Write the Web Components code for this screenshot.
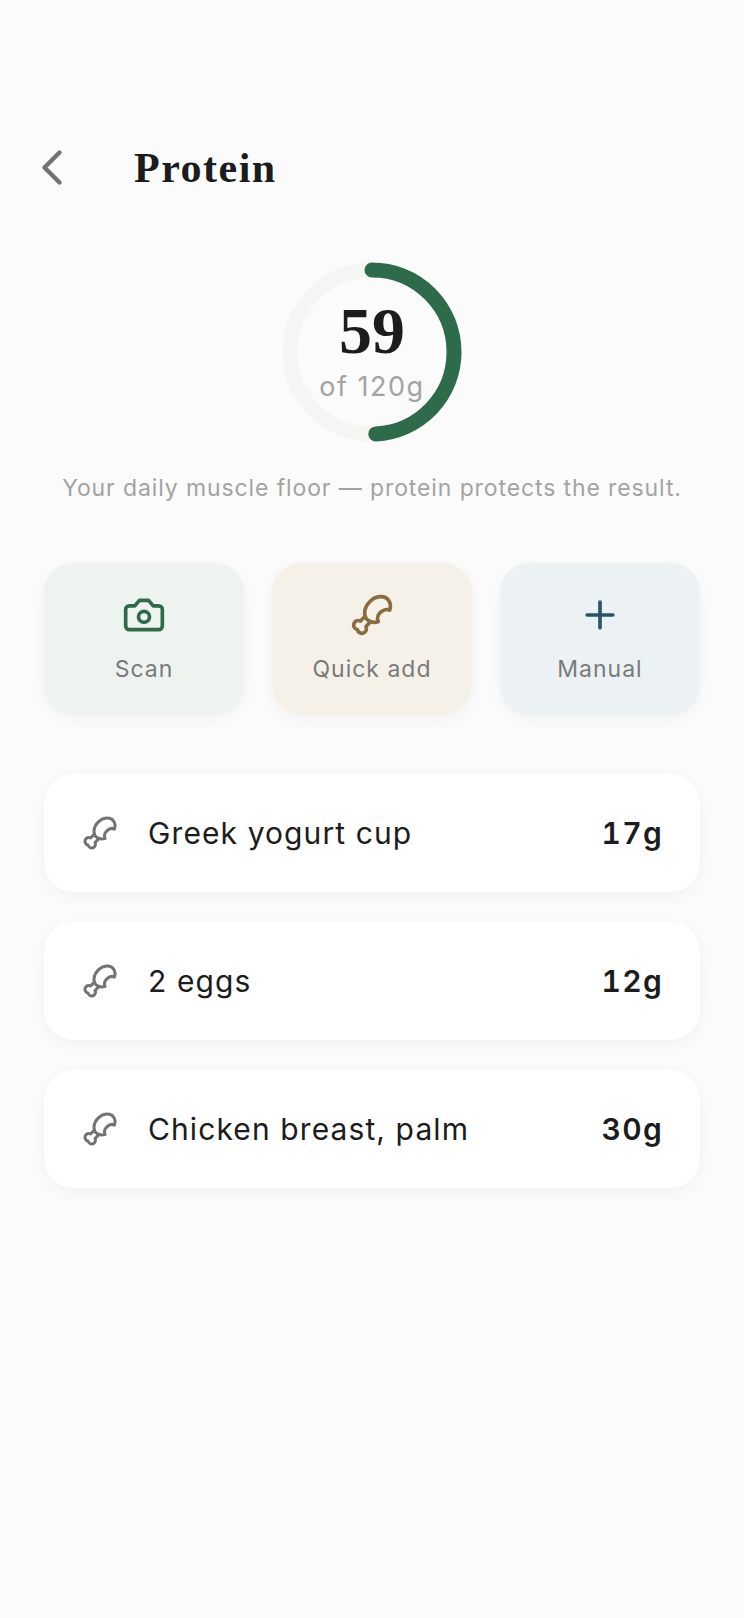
<!DOCTYPE html>
<html lang="en">
<head>
<meta charset="utf-8">
<title>Protein</title>
<style>
  html, body { margin: 0; background: #fbfbfb; }
  body { font-family: "Inter", "Liberation Sans", sans-serif; color: #1c1c1c; }
</style>
</head>
<body>
<protein-screen>
  <screen-header slot="header" title="Protein"></screen-header>
  <progress-ring slot="ring" value="59" goal="120"></progress-ring>
  <span slot="caption">Your daily muscle floor — protein protects the result.</span>
  <action-tile slot="actions" icon="camera" bg="#eff3f0" tint="#2e6b4a">Scan</action-tile>
  <action-tile slot="actions" icon="drumstick" bg="#f5f1e9" tint="#8a6d3f">Quick add</action-tile>
  <action-tile slot="actions" icon="plus" bg="#ecf1f4" tint="#2a5468">Manual</action-tile>
  <food-row slot="rows" grams="17g">Greek yogurt cup</food-row>
  <food-row slot="rows" grams="12g">2 eggs</food-row>
  <food-row slot="rows" grams="30g">Chicken breast, palm</food-row>
</protein-screen>

<script>
(function() {
  // shared icon paths, all on a 24 grid
  const ICONS = {
    camera: '<path d="M14.5 4h-5L7 7H4a2 2 0 0 0-2 2v9a2 2 0 0 0 2 2h16a2 2 0 0 0 2-2V9a2 2 0 0 0-2-2h-3l-2.5-3z"/><circle cx="12" cy="13" r="3"/>',
    drumstick: '<path d="M15.4 15.63a7.875 6 135 1 1 6.23-6.23 4.5 3.43 135 0 0-6.23 6.23"/><path d="m8.29 12.71-2.6 2.6a2.5 2.5 0 1 0-1.65 4.65A2.5 2.5 0 1 0 8.7 18.3l2.59-2.59"/>',
    plus: '<path d="M5 12h14"/><path d="M12 5v14"/>'
  };

  function iconSvg(name, size, weight) {
    return `<svg width="${size}" height="${size}" viewBox="0 0 24 24" fill="none" stroke="currentColor"
      stroke-width="${weight}" stroke-linecap="round" stroke-linejoin="round">${ICONS[name]}</svg>`;
  }

  class ScreenHeader extends HTMLElement {
    constructor() {
      super();
      this.attachShadow({ mode: 'open' });
      this.shadowRoot.innerHTML = `
        <style>
          :host { display: flex; align-items: center; gap: 72px; height: 40px; padding-left: 42px; }
          svg { display: block; flex: none; overflow: visible; }
          h1 {
            margin: 2px 0 0;
            font: 700 42px/40px "Liberation Serif", serif;
            letter-spacing: 1.5px;
            color: #1c1c1c;
          }
        </style>
        <svg width="20" height="35" viewBox="8 5 8 14" fill="none" stroke="#737373"
          stroke-width="1.75" stroke-linecap="round" stroke-linejoin="round">
          <path d="m15 18-6-6 6-6"/>
        </svg>
        <h1>${this.getAttribute('title')}</h1>
      `;
    }
  }
  customElements.define('screen-header', ScreenHeader);

  class ProgressRing extends HTMLElement {
    constructor() {
      super();
      this.attachShadow({ mode: 'open' });
      const value = Number(this.getAttribute('value'));
      const goal = Number(this.getAttribute('goal'));
      const r = 82;
      const full = 2 * Math.PI * r;
      this.shadowRoot.innerHTML = `
        <style>
          :host { display: block; position: relative; width: 180px; height: 180px; }
          svg { display: block; transform: rotate(-90deg); }
          .center {
            position: absolute; inset: 0;
            display: flex; flex-direction: column; align-items: center;
          }
          .value { margin-top: 38px; font: 700 66px/62px "Liberation Serif", serif; color: #1c1c1c; }
          .goal { margin-top: 8px; font: 400 27px/34px "Inter", sans-serif; letter-spacing: 1.5px; color: #a3a3a3; }
        </style>
        <svg width="180" height="180" viewBox="0 0 180 180" fill="none" stroke-width="15">
          <circle cx="90" cy="90" r="${r}" stroke="#f5f5f3"/>
          <circle cx="90" cy="90" r="${r}" stroke="#2e6b4a" stroke-linecap="round"
            stroke-dasharray="${full * value / goal} ${full}"/>
        </svg>
        <div class="center">
          <span class="value">${value}</span>
          <span class="goal">of ${goal}g</span>
        </div>
      `;
    }
  }
  customElements.define('progress-ring', ProgressRing);

  class ActionTile extends HTMLElement {
    constructor() {
      super();
      this.attachShadow({ mode: 'open' });
      this.shadowRoot.innerHTML = `
        <style>
          :host {
            display: flex; flex-direction: column; align-items: center;
            height: 152px; padding-top: 30px; box-sizing: border-box;
            border-radius: 30px;
            background: ${this.getAttribute('bg')};
            box-shadow: 0 4px 16px rgba(0, 0, 0, 0.04);
          }
          svg { display: block; color: ${this.getAttribute('tint')}; }
          .label {
            margin-top: 16px;
            font: 400 23px/32px "Inter", sans-serif; letter-spacing: 1px;
            color: #7a7a7a;
          }
        </style>
        ${iconSvg(this.getAttribute('icon'), 44, 2)}
        <span class="label"><slot></slot></span>
      `;
    }
  }
  customElements.define('action-tile', ActionTile);

  class FoodRow extends HTMLElement {
    constructor() {
      super();
      this.attachShadow({ mode: 'open' });
      this.shadowRoot.innerHTML = `
        <style>
          :host {
            display: flex; align-items: center; gap: 30px;
            height: 118px; padding: 0 37px 0 38px; box-sizing: border-box;
            border-radius: 30px;
            background: #fff;
            box-shadow: 0 4px 16px rgba(0, 0, 0, 0.04);
            font: 400 30px/38px "Inter", sans-serif; letter-spacing: 1.1px;
            color: #1c1c1c;
          }
          .wrap { flex: none; color: #737373; }
          svg { display: block; }
          .name { flex: 1; }
          .grams { font-weight: 600; font-variant-numeric: tabular-nums; letter-spacing: 1.3px; }
        </style>
        <span class="wrap">${iconSvg('drumstick', 36, 2)}</span>
        <span class="name"><slot></slot></span>
        <span class="grams">${this.getAttribute('grams')}</span>
      `;
    }
  }
  customElements.define('food-row', FoodRow);

  class ProteinScreen extends HTMLElement {
    constructor() {
      super();
      this.attachShadow({ mode: 'open' });
      this.shadowRoot.innerHTML = `
        <style>
          :host {
            display: flex; flex-direction: column;
            min-height: 1618px; box-sizing: border-box;
            padding-top: 147px;
            background: #fbfbfb;
          }
          .ring { display: flex; justify-content: center; margin-top: 75px; }
          .caption {
            margin-top: 30px; text-align: center;
            font: 400 23px/32px "Inter", sans-serif; letter-spacing: 0.89px;
            color: #a3a3a3;
          }
          .actions {
            display: grid; grid-template-columns: repeat(3, 200px); gap: 28px;
            margin: 59px 44px 0;
          }
          .rows {
            display: flex; flex-direction: column; gap: 30px;
            margin: 59px 44px 0;
          }
        </style>
        <slot name="header"></slot>
        <div class="ring"><slot name="ring"></slot></div>
        <div class="caption"><slot name="caption"></slot></div>
        <div class="actions"><slot name="actions"></slot></div>
        <div class="rows"><slot name="rows"></slot></div>
      `;
    }
  }
  customElements.define('protein-screen', ProteinScreen);
})();
</script>
</body>
</html>
